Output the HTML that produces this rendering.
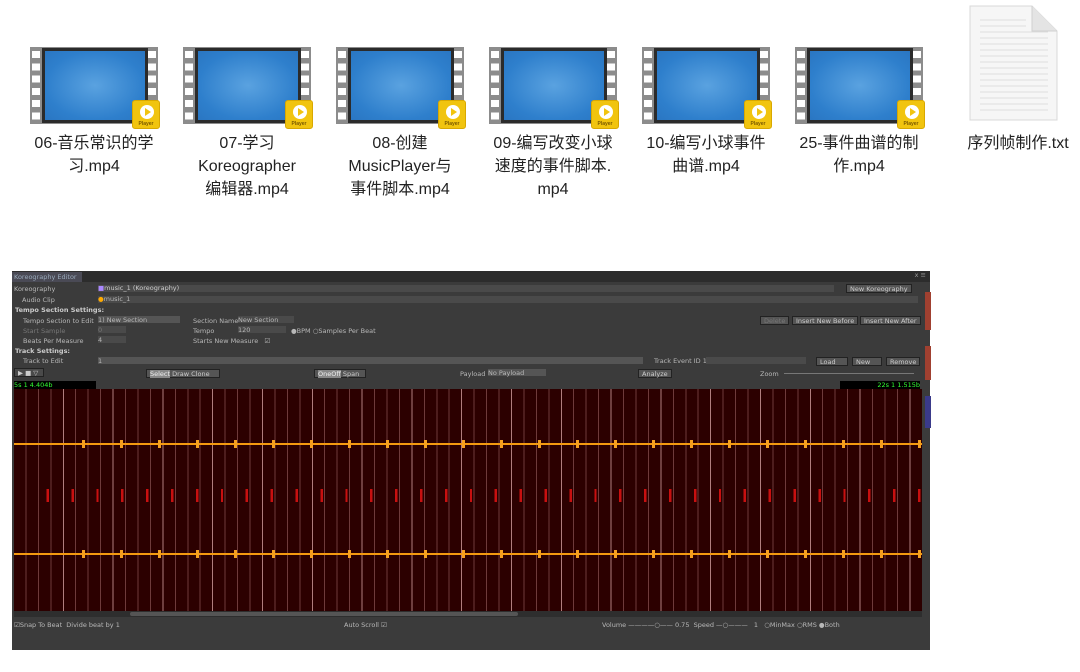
<!DOCTYPE html>
<html><head><meta charset="utf-8"><style>
*{margin:0;padding:0;box-sizing:border-box}
body{width:1080px;height:672px;background:#fff;position:relative;overflow:hidden;font-family:"Liberation Sans","Noto Sans CJK SC",sans-serif}
.vid{position:absolute;top:47px;width:128px;height:77px;background:#8c8c8c}
.vid .scr{position:absolute;left:12px;top:1px;width:106px;height:75px;background:#2b2b2b}
.vid .scr i{position:absolute;left:3px;top:3px;right:3px;bottom:3px;background:radial-gradient(ellipse at 50% 50%,#5aa2e0,#2e7fcc 70%,#2a76c2)}
.badge{position:absolute;width:28px;height:29px;background:#f1c40f;border-radius:3px;border:1px solid #d9a800}
.badge b{position:absolute;left:7px;top:4px;width:14px;height:14px;border-radius:50%;background:#fff}
.badge b:after{content:"";position:absolute;left:5px;top:3px;border-left:6px solid #f1c40f;border-top:4px solid transparent;border-bottom:4px solid transparent}
.badge s{position:absolute;left:0;right:0;bottom:1px;font-size:5px;text-align:center;color:#7a5a00;text-decoration:none;font-weight:bold}
.lbl{position:absolute;top:132px;width:150px;text-align:center;font-size:16px;line-height:23px;color:#222}
.ed{position:absolute;left:12px;top:271px;width:918px;height:379px;background:#3b3b3b;font-size:6.5px;color:#b8b8b8;font-family:"DejaVu Sans",sans-serif}
.ed div{position:absolute;white-space:nowrap}
.fld{background:#4a4a4a;height:7px}
.btn{background:#555;border:1px solid #222;height:9px;padding:0 3px;line-height:8px;color:#ccc}
.wave{left:2px;top:118px;width:908px;height:222px;background:
repeating-linear-gradient(90deg,transparent 0 48.8px,rgba(230,180,180,.55) 48.8px 49.8px),
repeating-linear-gradient(90deg,transparent 0 11.45px,rgba(190,130,130,.45) 11.45px 12.45px),#2c0000}
.vid:before,.vid:after{content:"";position:absolute;top:4px;width:8px;height:70px;background:repeating-linear-gradient(180deg,#fff 0 7px,transparent 7px 12.3px)}
.vid:before{left:2px}.vid:after{right:2px}
</style></head><body>

<div class="vid" style="left:30px"><div class="scr"><i></i></div></div>
<div class="vid" style="left:183px"><div class="scr"><i></i></div></div>
<div class="vid" style="left:336px"><div class="scr"><i></i></div></div>
<div class="vid" style="left:489px"><div class="scr"><i></i></div></div>
<div class="vid" style="left:642px"><div class="scr"><i></i></div></div>
<div class="vid" style="left:795px"><div class="scr"><i></i></div></div>
<div class="badge" style="left:132px;top:100px"><b></b><s>Player</s></div>
<div class="badge" style="left:285px;top:100px"><b></b><s>Player</s></div>
<div class="badge" style="left:438px;top:100px"><b></b><s>Player</s></div>
<div class="badge" style="left:591px;top:100px"><b></b><s>Player</s></div>
<div class="badge" style="left:744px;top:100px"><b></b><s>Player</s></div>
<div class="badge" style="left:897px;top:100px"><b></b><s>Player</s></div>

<div class="lbl" style="left:19px">06-音乐常识的学<br>习.mp4</div>
<div class="lbl" style="left:172px">07-学习<br>Koreographer<br>编辑器.mp4</div>
<div class="lbl" style="left:325px">08-创建<br>MusicPlayer与<br>事件脚本.mp4</div>
<div class="lbl" style="left:478px">09-编写改变小球<br>速度的事件脚本.<br>mp4</div>
<div class="lbl" style="left:631px">10-编写小球事件<br>曲谱.mp4</div>
<div class="lbl" style="left:784px">25-事件曲谱的制<br>作.mp4</div>

<svg style="position:absolute;left:968px;top:4px" width="92" height="118">
<path d="M2 2H64L89 27V116H2Z" fill="#f6f6f6" stroke="#d8d8d8"/>
<path d="M64 2V27H89" fill="#e4e4e4" stroke="#d0d0d0"/>
<g stroke="#ddd" stroke-width="1">
<path d="M12 16H58M12 22H58M12 28H80M12 34H80M12 40H80M12 46H80M12 52H80M12 58H80M12 64H80M12 70H80M12 76H80M12 82H80M12 88H80M12 94H80M12 100H80M12 106H80"/></g></svg>
<div class="lbl" style="left:948px;top:132px;width:140px">序列帧制作.txt</div>

<div class="ed">
<div style="left:0;top:0;width:918px;height:11px;background:#2c2c2c"></div>
<div style="left:0;top:1px;width:70px;height:10px;background:#4a4a55;color:#9ab;padding-left:2px;line-height:10px">Koreography Editor</div>
<div style="right:4px;top:0;color:#999">x ≡</div>
<div style="left:2px;top:14px">Koreography</div>
<div class="fld" style="left:86px;top:14px;width:736px;color:#ccc;line-height:7px"><span style="color:#a8f">■</span>music_1 (Koreography)</div>
<div class="btn" style="left:834px;top:13px">New Koreography</div>
<div style="left:10px;top:25px">Audio Clip</div>
<div class="fld" style="left:86px;top:25px;width:820px;line-height:7px"><span style="color:#fa0">●</span>music_1</div>
<div style="left:3px;top:35px;font-weight:bold;color:#ccc">Tempo Section Settings:</div>
<div style="left:11px;top:46px">Tempo Section to Edit</div>
<div class="fld" style="left:86px;top:45px;width:82px;background:#555">1) New Section</div>
<div style="left:181px;top:46px">Section Name</div>
<div class="fld" style="left:226px;top:45px;width:56px">New Section</div>
<div style="left:11px;top:56px;color:#777">Start Sample</div>
<div class="fld" style="left:86px;top:55px;width:28px;color:#777">0</div>
<div style="left:181px;top:56px">Tempo</div>
<div class="fld" style="left:226px;top:55px;width:48px">120</div>
<div style="left:279px;top:56px">●BPM ○Samples Per Beat</div>
<div style="left:11px;top:66px">Beats Per Measure</div>
<div class="fld" style="left:86px;top:65px;width:28px">4</div>
<div style="left:181px;top:66px">Starts New Measure &nbsp; ☑</div>
<div class="btn" style="left:748px;top:45px;color:#777">Delete</div>
<div class="btn" style="left:780px;top:45px">Insert New Before</div>
<div class="btn" style="left:848px;top:45px">Insert New After</div>
<div style="left:3px;top:76px;font-weight:bold;color:#ccc">Track Settings:</div>
<div style="left:11px;top:86px">Track to Edit</div>
<div class="fld" style="left:86px;top:86px;width:545px;background:#555">1</div>
<div style="left:642px;top:86px">Track Event ID 1</div>
<div class="fld" style="left:694px;top:86px;width:100px"></div>
<div class="btn" style="left:804px;top:86px;width:32px">Load</div>
<div class="btn" style="left:840px;top:86px;width:30px">New</div>
<div class="btn" style="left:874px;top:86px;width:34px">Remove</div>
<div class="btn" style="left:2px;top:97px;width:30px;background:#4a4a4a">▶ ■ ▽</div>
<div class="btn" style="left:134px;top:98px;width:74px"><span style="background:#888;color:#eee">Select</span> Draw Clone</div>
<div class="btn" style="left:302px;top:98px;width:52px"><span style="background:#888;color:#eee">OneOff</span> Span</div>
<div style="left:448px;top:99px">Payload</div>
<div class="fld" style="left:476px;top:98px;width:58px;background:#555">No Payload</div>
<div class="btn" style="left:626px;top:98px">Analyze</div>
<div style="left:748px;top:99px">Zoom</div>
<div style="left:772px;top:102px;width:130px;height:1px;background:#777"></div>
<div style="left:2px;top:110px;width:82px;height:8px;background:#000;color:#3f3;line-height:8px">5s 1 4.404b</div>
<div style="left:828px;top:110px;width:80px;height:8px;background:#000;color:#3f3;line-height:8px;text-align:right">22s 1 1.515b</div>
<div class="wave"></div>
<div style="left:2px;top:172px;width:908px;height:2px;background:#f59a10"></div>
<div style="left:2px;top:282px;width:908px;height:2px;background:#f59a10"></div>
<div style="left:35px;top:169px;width:880px;height:8px;background:repeating-linear-gradient(90deg,transparent 0 35px,#f5a020 35px 38px)"></div>
<div style="left:35px;top:279px;width:880px;height:8px;background:repeating-linear-gradient(90deg,transparent 0 35px,#f5a020 35px 38px)"></div>
<div style="left:12px;top:218px;width:900px;height:13px;background:repeating-linear-gradient(90deg,transparent 0 22.5px,#c81010 22.5px 24.9px)"></div>
<div style="left:2px;top:340px;width:908px;height:6px;background:#2e2e2e"></div>
<div style="left:118px;top:341px;width:388px;height:4px;background:#555;border-radius:2px"></div>
<div style="left:2px;top:350px">☑Snap To Beat &nbsp;Divide beat by 1</div>
<div style="left:332px;top:350px">Auto Scroll ☑</div>
<div style="left:590px;top:350px">Volume ————○—— 0.75 &nbsp;Speed —○——— &nbsp; 1 &nbsp; ○MinMax ○RMS ●Both</div>
</div>
<div style="position:absolute;left:925px;top:292px;width:6px;height:38px;background:#a04030"></div>
<div style="position:absolute;left:925px;top:346px;width:6px;height:34px;background:#a04030"></div>
<div style="position:absolute;left:925px;top:396px;width:6px;height:32px;background:#3a3a8a"></div>
</body></html>
